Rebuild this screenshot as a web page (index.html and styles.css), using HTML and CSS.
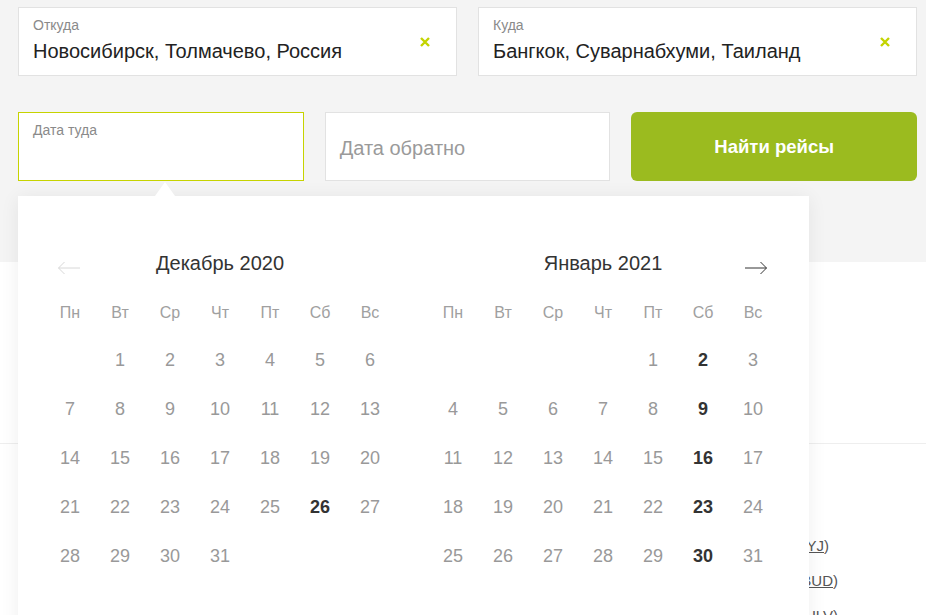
FILE: index.html
```html
<!DOCTYPE html>
<html lang="ru">
<head>
<meta charset="utf-8">
<title>Поиск рейсов</title>
<link rel="stylesheet" href="styles.css">
</head>
<body>
<div class="page">
  <section class="search">
    <div class="row row-route">
      <div class="field">
        <div class="field-body">
          <div class="field-label">Откуда</div>
          <div class="field-value">Новосибирск, Толмачево, Россия</div>
        </div>
        <svg class="clear" viewBox="0 0 10 10" width="10" height="10"><path d="M1 1L9 9M9 1L1 9" stroke="#c3d400" stroke-width="2.4" stroke-linecap="butt"/></svg>
      </div>
      <div class="field">
        <div class="field-body">
          <div class="field-label">Куда</div>
          <div class="field-value">Бангкок, Суварнабхуми, Таиланд</div>
        </div>
        <svg class="clear" viewBox="0 0 10 10" width="10" height="10"><path d="M1 1L9 9M9 1L1 9" stroke="#c3d400" stroke-width="2.4" stroke-linecap="butt"/></svg>
      </div>
    </div>
    <div class="row row-dates">
      <div class="field field-active">
        <div class="field-body">
          <div class="field-label">Дата туда</div>
        </div>
      </div>
      <div class="field field-placeholder">
        <div class="placeholder">Дата обратно</div>
      </div>
      <button class="find">Найти рейсы</button>
    </div>
  </section>

  <section class="gap-area"></section>

  <section class="links">
    <div class="links-col">
      <div class="link-line link-line-short">Новосибирск — Сеул (<u>ICN-OVB-YJ</u>)</div>
      <div class="link-line">Новосибирск — Бангкок (<u>BKK-OVB-BUD</u>)</div>
      <div class="link-line">Новосибирск — Ульяновск (<u>OVB-ULV</u>)</div>
    </div>
  </section>

  <div class="datepicker">
    <div class="pointer"></div>
    <div class="months">
      <div class="month">
        <div class="month-head">
          <span class="nav nav-prev"><svg viewBox="0 0 24 14" width="24" height="14"><path d="M23 7H1.5M7.5 1L1.5 7L7.5 13" fill="none" stroke="#d8d8d8" stroke-width="1"/></svg></span>
          <span class="month-title">Декабрь 2020</span>
          <span class="nav"></span>
        </div>
        <div class="week">
          <span>Пн</span><span>Вт</span><span>Ср</span><span>Чт</span><span>Пт</span><span>Сб</span><span>Вс</span>
        </div>
        <div class="days">
          <span></span><span>1</span><span>2</span><span>3</span><span>4</span><span>5</span><span>6</span>
          <span>7</span><span>8</span><span>9</span><span>10</span><span>11</span><span>12</span><span>13</span>
          <span>14</span><span>15</span><span>16</span><span>17</span><span>18</span><span>19</span><span>20</span>
          <span>21</span><span>22</span><span>23</span><span>24</span><span>25</span><span class="on">26</span><span>27</span>
          <span>28</span><span>29</span><span>30</span><span>31</span><span></span><span></span><span></span>
        </div>
      </div>
      <div class="month">
        <div class="month-head">
          <span class="nav"></span>
          <span class="month-title">Январь 2021</span>
          <span class="nav nav-next"><svg viewBox="0 0 24 14" width="24" height="14"><path d="M1 7H22.5M16.5 1L22.5 7L16.5 13" fill="none" stroke="#333" stroke-width="1"/></svg></span>
        </div>
        <div class="week">
          <span>Пн</span><span>Вт</span><span>Ср</span><span>Чт</span><span>Пт</span><span>Сб</span><span>Вс</span>
        </div>
        <div class="days">
          <span></span><span></span><span></span><span></span><span>1</span><span class="on">2</span><span>3</span>
          <span>4</span><span>5</span><span>6</span><span>7</span><span>8</span><span class="on">9</span><span>10</span>
          <span>11</span><span>12</span><span>13</span><span>14</span><span>15</span><span class="on">16</span><span>17</span>
          <span>18</span><span>19</span><span>20</span><span>21</span><span>22</span><span class="on">23</span><span>24</span>
          <span>25</span><span>26</span><span>27</span><span>28</span><span>29</span><span class="on">30</span><span>31</span>
        </div>
      </div>
    </div>
  </div>
</div>
</body>
</html>
```

FILE: styles.css
```css
* { box-sizing: border-box; }

html, body {
  margin: 0;
  padding: 0;
  background: #fff;
  font-family: "Liberation Sans", Arial, sans-serif;
  color: #222;
}

body { overflow: hidden; }

.page {
  position: relative;
  width: 926px;
  height: 615px;
  overflow: hidden;
}

.search {
  background: #f4f4f4;
  height: 262px;
  padding: 7px 9px 0 18px;
  display: flex;
  flex-direction: column;
  gap: 36px;
}

.row {
  display: grid;
  height: 69px;
  gap: 21px;
}

.row-route { grid-template-columns: 1fr 1fr; }
.row-dates { grid-template-columns: 1fr 1fr 1fr; }

.field {
  background: #fff;
  border: 1px solid #e2e2e2;
  display: flex;
  align-items: center;
  padding: 0 26px 0 14px;
}

.field-body {
  flex: 1;
  align-self: flex-start;
  padding-top: 9px;
}

.field-label {
  font-size: 14px;
  line-height: 17px;
  color: #8a8a8a;
}

.field-value {
  margin-top: 5px;
  font-size: 20px;
  line-height: 24px;
  color: #222;
  white-space: nowrap;
}

.clear { flex: none; display: block; }

.field-active { border-color: #c6d300; }

.placeholder {
  font-size: 20px;
  line-height: 24px;
  color: #9a9a9a;
  padding-top: 2px;
}

.find {
  border: none;
  border-radius: 6px;
  background: #9bbb1f;
  color: #fff;
  font-family: "Liberation Sans", Arial, sans-serif;
  font-size: 18.5px;
  font-weight: bold;
  padding: 0;
  margin: 0;
}

.gap-area { height: 181px; }

.links {
  border-top: 1px solid #eeeeee;
  display: flex;
  justify-content: flex-end;
  padding: 84px 88px 0 18px;
}

.links-col {
  display: flex;
  flex-direction: column;
  align-items: flex-end;
}

.link-line {
  font-size: 15px;
  line-height: 35px;
  color: #555;
  white-space: nowrap;
}

.link-line-short { margin-right: 9px; }

.link-line u { color: #555; }

.datepicker {
  position: absolute;
  left: 18px;
  top: 196px;
  width: 791px;
  height: 460px;
  background: #fff;
  box-shadow: 0 2px 18px rgba(0, 0, 0, 0.07);
  padding: 47px 31px 0 27px;
}

.pointer {
  position: absolute;
  left: 137px;
  top: -14px;
  width: 0;
  height: 0;
  border-left: 10px solid transparent;
  border-right: 10px solid transparent;
  border-bottom: 14px solid #fff;
}

.months {
  display: flex;
  justify-content: space-between;
}

.month { width: 350px; }

.month-head {
  display: grid;
  grid-template-columns: 50px 1fr 50px;
  height: 40px;
  align-items: center;
  margin-bottom: 10px;
}

.month-title {
  text-align: center;
  font-size: 20px;
  color: #333;
}

.nav {
  display: flex;
  justify-content: center;
  align-items: center;
  padding-top: 9px;
}

.nav-prev { padding-right: 3px; }
.nav-next { padding-left: 6px; }

.nav svg { display: block; }

.week {
  display: grid;
  grid-template-columns: repeat(7, 50px);
  height: 40px;
  align-items: center;
  margin-bottom: 3px;
}

.week span {
  text-align: center;
  font-size: 16px;
  color: #a0a0a0;
}

.days {
  display: grid;
  grid-template-columns: repeat(7, 50px);
  grid-auto-rows: 49px;
  align-items: center;
}

.days span {
  text-align: center;
  font-size: 18px;
  color: #999;
}

.days span.on {
  color: #333;
  font-weight: bold;
}
```
